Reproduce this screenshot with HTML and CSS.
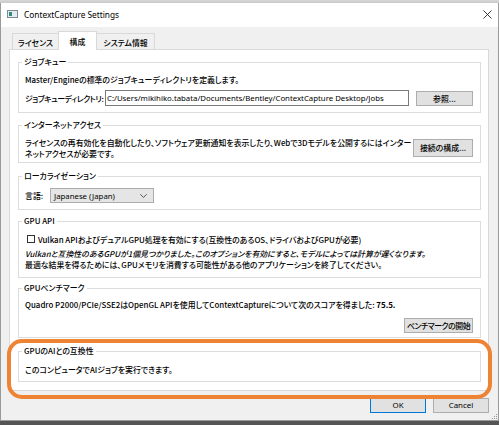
FILE: index.html
```html
<!DOCTYPE html>
<html lang="ja">
<head>
<meta charset="utf-8">
<title>ContextCapture Settings</title>
<link rel="stylesheet" href="styles.css">
</head>
<body>
<div class="strip"></div>
<div class="window">
  <div class="titlebar">
    <svg class="appicon" width="11" height="8" viewBox="0 0 11 8"><rect x="0.5" y="0.5" width="10" height="7" fill="#e3eaf0" stroke="#7d8a95"/><rect x="2" y="2" width="3" height="4" fill="#2e8c7a"/></svg>
    <span class="title">ContextCapture Settings</span>
    <svg class="close" width="9" height="9" viewBox="0 0 9 9"><path d="M0.5 0.5L8.5 8.5M8.5 0.5L0.5 8.5" stroke="#222" stroke-width="0.9"/></svg>
  </div>
  <div class="client">
    <div class="tabs">
      <div class="tab t1">ライセンス</div>
      <div class="tab t2 active">構成</div>
      <div class="tab t3">システム情報</div>
    </div>
    <div class="pane">
      <fieldset class="group g1">
        <legend>ジョブキュー</legend>
        <p class="line">Master/Engineの標準のジョブキューディレクトリを定義します。</p>
        <div class="row r-dir">
          <span class="label">ジョブキューディレクトリ:</span>
          <div class="input">C:/Users/mikihiko.tabata/Documents/Bentley/ContextCapture Desktop/Jobs</div>
          <button class="btn b-browse">参照...</button>
        </div>
      </fieldset>
      <fieldset class="group g2">
        <legend>インターネットアクセス</legend>
        <div class="row r-net">
          <p class="lines">ライセンスの再有効化を自動化したり、ソフトウェア更新通知を表示したり、Webで3Dモデルを公開するにはインター<br>ネットアクセスが必要です。</p>
          <button class="btn b-conn">接続の構成...</button>
        </div>
      </fieldset>
      <fieldset class="group g3">
        <legend>ローカライゼーション</legend>
        <div class="row r-lang">
          <span class="label-lang">言語:</span>
          <div class="select"><span>Japanese (Japan)</span><svg width="7" height="4" viewBox="0 0 7 4"><path d="M0.3 0.3L3.5 3.4L6.7 0.3" fill="none" stroke="#333" stroke-width="0.8"/></svg></div>
        </div>
      </fieldset>
      <fieldset class="group g4">
        <legend>GPU API</legend>
        <div class="row r-check"><span class="checkbox"></span><span>Vulkan APIおよびデュアルGPU処理を有効にする(互換性のあるOS、ドライバおよびGPUが必要)</span></div>
        <p class="note italic first">Vulkanと互換性のあるGPUが1個見つかりました。このオプションを有効にすると、モデルによっては計算が遅くなります。</p>
        <p class="note">最適な結果を得るためには、GPUメモリを消費する可能性がある他のアプリケーションを終了してください。</p>
      </fieldset>
      <fieldset class="group g5">
        <legend>GPUベンチマーク</legend>
        <p class="line">Quadro P2000/PCIe/SSE2はOpenGL APIを使用してContextCaptureについて次のスコアを得ました: <b>75.5.</b></p>
        <div class="row r-bench"><button class="btn b-bench">ベンチマークの開始</button></div>
      </fieldset>
      <fieldset class="group g6">
        <legend>GPUのAIとの互換性</legend>
        <p class="line">このコンピュータでAIジョブを実行できます。</p>
      </fieldset>
    </div>
    <div class="dlgbuttons">
      <button class="btn dlg ok">OK</button>
      <button class="btn dlg">Cancel</button>
    </div>
  </div>
  <svg class="grip" width="5" height="5" viewBox="0 0 5 5"><rect x="4" y="0" width="1" height="1" fill="#999"/><rect x="2" y="2" width="1" height="1" fill="#999"/><rect x="4" y="2" width="1" height="1" fill="#999"/><rect x="0" y="4" width="1" height="1" fill="#999"/><rect x="2" y="4" width="1" height="1" fill="#999"/><rect x="4" y="4" width="1" height="1" fill="#999"/></svg>
</div>
<div class="highlight"></div>
</body>
</html>
```
FILE: styles.css
```css
* { box-sizing: border-box; }
html, body { margin: 0; padding: 0; }
body {
  width: 499px;
  height: 425px;
  overflow: hidden;
  position: relative;
  background: #555;
  font-family: "Noto Sans CJK JP", "Noto Sans", sans-serif;
  font-size: 7.9px;
  font-weight: 500;
  color: #000;
  font-feature-settings: "palt";
}
.strip {
  height: 3px;
  background: linear-gradient(#d8d8d8, #c8c8c8);
}
.window {
  position: relative;
  background: #f0f0f0;
  border: 1px solid #9a9a9a;
  border-top: 0;
}
.titlebar {
  height: 24px;
  background: #fff;
  display: flex;
  align-items: center;
  padding: 0 6px 2px 6px;
}
.appicon { flex: none; }
.title {
  margin-left: 6px;
  font-family: "Noto Sans", sans-serif;
  font-weight: 400;
  font-size: 8.3px;
  color: #000;
  flex: 1;
}
.close { flex: none; }
.client {
  padding: 4px 9px 7px 8px;
}
.tabs {
  height: 18px;
  display: flex;
  align-items: flex-end;
  padding-left: 3px;
  position: relative;
  z-index: 1;
}
.tab {
  height: 16px;
  line-height: 14px;
  padding-top: 2px;
  text-align: center;
  border: 1px solid #d9d9d9;
  border-bottom: 0;
  background: #f0f0f0;
  white-space: nowrap;
}
.t1 { width: 46px; border-right: 0; }
.t2 { width: 39px; }
.t3 { width: 58px; border-left: 0; }
.tab.active {
  height: 19px;
  margin-bottom: -1px;
  background: #fff;
  line-height: 15px;
}
.pane {
  background: #fff;
  border: 1px solid #d9d9d9;
  padding: 7px 7px 8px 8px;
}
.group {
  margin: 0;
  min-width: 0;
  border: 1px solid #dcdcdc;
  padding: 0 7px 0 6px;
}
.group legend {
  padding: 0 2px;
  margin-left: -3px;
  line-height: 10px;
  height: 10px;
  white-space: nowrap;
}
.line, .lines, .note {
  margin: 0;
  white-space: nowrap;
}
.line { line-height: 10px; height: 10px; }
.lines { line-height: 11px; flex: 1; }
.note { line-height: 11px; height: 11px; }
.italic { font-style: italic; }
.row { display: flex; align-items: center; }

.g1 { padding-top: 8px; padding-bottom: 6px; }
.r-dir { margin-top: 5px; height: 16px; }
.label {
  width: 80px;
  flex: none;
  white-space: nowrap;
  letter-spacing: -0.45px;
}
.input {
  flex: 1;
  height: 16px;
  border: 1px solid #7a7a7a;
  background: #fff;
  font-family: "Noto Sans", sans-serif;
  font-weight: 400;
  font-size: 7.8px;
  line-height: 14px;
  padding-left: 1px;
  white-space: nowrap;
  overflow: hidden;
}
.btn {
  font-family: inherit;
  font-size: 7.9px;
  font-weight: 500;
  font-feature-settings: "palt";
  color: #000;
  height: 15px;
  padding: 0;
  line-height: 13px;
  border: 1px solid #adadad;
  background: #e1e1e1;
  text-align: center;
  white-space: nowrap;
}
.b-browse { width: 57px; margin-left: 7px; }

.g2 { margin-top: 7px; padding-top: 7px; padding-bottom: 3px; }
.r-net { height: 22px; }
.b-conn { width: 60px; height: 18px; line-height: 16px; flex: none; }

.g3 { margin-top: 8px; padding-top: 7px; padding-bottom: 6px; }
.r-lang { height: 15px; }
.label-lang { width: 25px; flex: none; }
.select {
  width: 104px;
  height: 15px;
  border: 1px solid #acacac;
  background: #e5e5e5;
  display: flex;
  align-items: center;
  justify-content: space-between;
  padding: 0 6px 0 3px;
  font-family: "Noto Sans", sans-serif;
  font-weight: 400;
  font-size: 7.8px;
}

.g4 { margin-top: 6px; padding-top: 8px; padding-bottom: 7px; }
.r-check { height: 10px; }
.note.first { margin-top: 4px; }
.checkbox {
  width: 8px;
  height: 8px;
  margin: 0 3px 0 2px;
  border: 1px solid #333;
  background: #fff;
  flex: none;
}

.g5 { margin-top: 5px; padding-top: 7px; padding-bottom: 4px; }
.r-bench { margin-top: 8px; justify-content: flex-end; }
.b-bench { width: 69px; letter-spacing: -0.5px; }

.g6 { margin-top: 8px; padding-top: 9px; padding-bottom: 6px; }

.dlgbuttons {
  margin-top: 7px;
  display: flex;
  justify-content: flex-end;
  gap: 7px;
}
.dlg { width: 56px; font-family: "Noto Sans", sans-serif; font-weight: 400; }
.ok { border-color: #0078d7; }

.grip {
  position: absolute;
  right: 1px;
  bottom: 1px;
}
.highlight {
  position: absolute;
  left: 7px;
  top: 339px;
  width: 485px;
  height: 60px;
  border: 4px solid #ee8333;
  border-radius: 15px;
}
```
